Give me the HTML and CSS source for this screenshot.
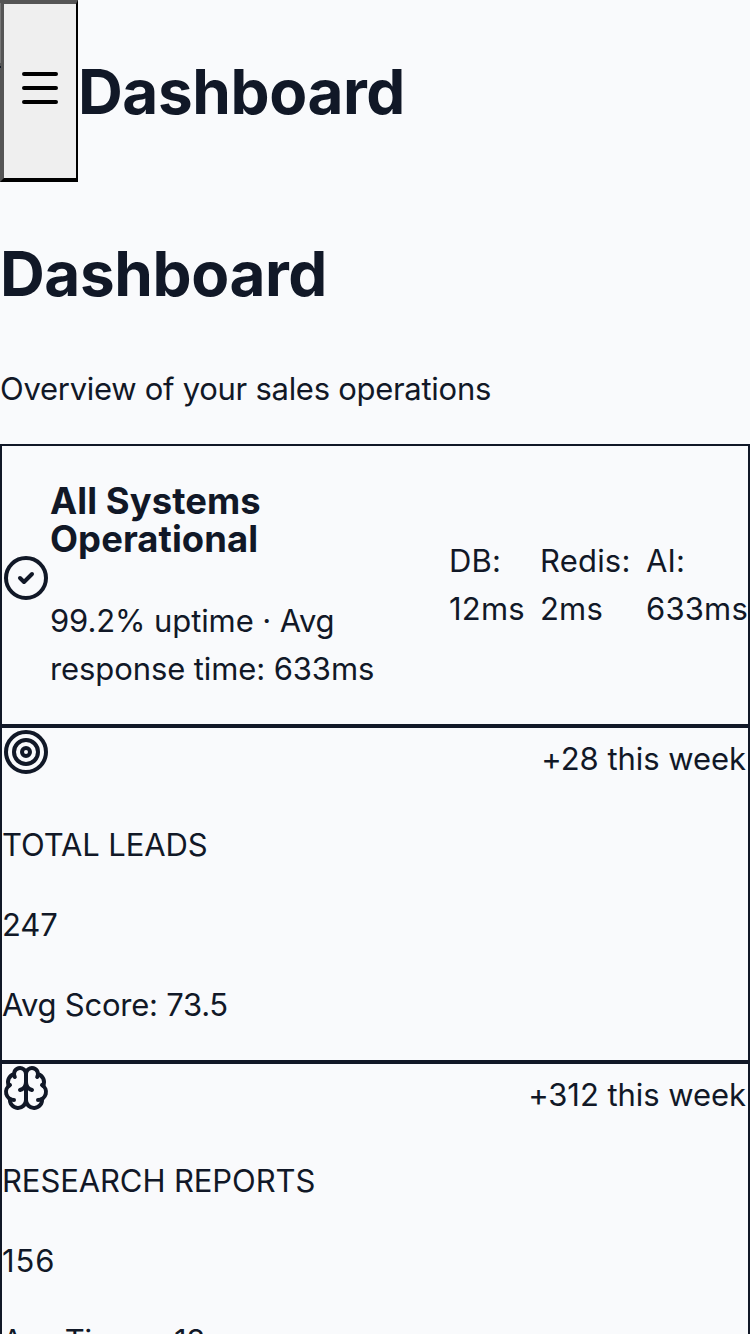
FILE: index.html
```html
<!DOCTYPE html>
<html lang="en">
<head>
<meta charset="utf-8">
<title>Dashboard</title>
<link rel="stylesheet" href="styles.css">
</head>
<body>
<header class="topbar">
  <button class="menu" aria-label="Open menu">
    <svg class="icon" viewBox="0 0 24 24"><path d="M4 5h16M4 12h16M4 19h16"/></svg>
  </button>
  <h1>Dashboard</h1>
</header>
<main>
  <h1>Dashboard</h1>
  <p>Overview of your sales operations</p>
  <section class="card status">
    <div class="summary">
      <div class="glyph glyph-status"><svg class="icon" viewBox="0 0 24 24"><circle cx="12" cy="12" r="10"/><path d="m9 12 2 2 4-4"/></svg></div>
      <div class="message">
        <h3>All Systems Operational</h3>
        <p>99.2% uptime · Avg response time: 633ms</p>
      </div>
    </div>
    <div class="latency">
      <div>DB:<br>12ms</div>
      <div>Redis:<br>2ms</div>
      <div>AI:<br>633ms</div>
    </div>
  </section>
  <section class="card">
    <div class="card-head">
      <div class="glyph"><svg class="icon" viewBox="0 0 24 24"><circle cx="12" cy="12" r="10"/><circle cx="12" cy="12" r="6"/><circle cx="12" cy="12" r="2"/></svg></div>
      <span class="trend">+28 this week</span>
    </div>
    <p>TOTAL LEADS</p>
    <p>247</p>
    <p class="detail">Avg Score: 73.5</p>
  </section>
  <section class="card">
    <div class="card-head">
      <div class="glyph"><svg class="icon" viewBox="0 0 24 24"><path d="M12 18V5"/><path d="M15 13a4.17 4.17 0 0 1-3-4 4.17 4.17 0 0 1-3 4"/><path d="M17.598 6.5A3 3 0 1 0 12 5a3 3 0 1 0-5.598 1.5"/><path d="M17.997 5.125a4 4 0 0 1 2.526 5.77"/><path d="M18 18a4 4 0 0 0 2-7.464"/><path d="M19.967 17.483A4 4 0 1 1 12 18a4 4 0 1 1-7.967-.517"/><path d="M6 18a4 4 0 0 1-2-7.464"/><path d="M6.003 5.125a4 4 0 0 0-2.526 5.77"/></svg></div>
      <span class="trend">+312 this week</span>
    </div>
    <p>RESEARCH REPORTS</p>
    <p class="count">156</p>
    <p class="detail">Avg Time: ~18s</p>
  </section>
</main>
</body>
</html>
```
FILE: styles.css
```css
* { box-sizing: border-box; }
html { overflow: hidden; }
body {
  margin: 0;
  height: 1334px;
  overflow: hidden;
  background: #f9fafc;
  color: #111827;
  font: 31px/48px Inter, "Liberation Sans", sans-serif;
  letter-spacing: -0.1px;
}
h1 { margin: 43px 0; padding-top: 1px; font-size: 62px; line-height: 95px; font-weight: 700; letter-spacing: -0.4px; }
h3 { margin: 37.4px 0; font-size: 36.4px; line-height: 37.5px; font-weight: 700; letter-spacing: 0.08px; }
p { margin: 32px 0 31px; padding-top: 1px; }
main > p { letter-spacing: -0.28px; }
.icon {
  width: 48px;
  height: 48px;
  display: block;
  fill: none;
  stroke: currentColor;
  stroke-width: 2;
  stroke-linecap: round;
  stroke-linejoin: round;
}
.topbar { display: flex; height: 182px; position: relative; }
.topbar::before {
  content: "";
  position: absolute;
  left: 0;
  top: 3px;
  width: 1px;
  height: 60px;
  background: #777;
}
.topbar::after {
  content: "";
  position: absolute;
  left: 0;
  top: 66px;
  width: 1px;
  height: 2px;
  background: #111827;
}
.menu {
  width: 78px;
  flex: none;
  padding: 0 0 6px 12px;
  border: 4px solid;
  border-right-width: 2px;
  border-color: #555 #000 #000 #555;
  background: #efefef;
  color: #000;
}
.card { border: 2px solid #111827; }
.card + .card > p { margin: 32px 0; padding: 0; transform: translateY(1px); }
.card > .detail { letter-spacing: -0.25px; }
.card > .count { letter-spacing: 0.9px; }
.status { display: flex; justify-content: space-between; align-items: center; }
.summary { display: flex; align-items: center; }
.glyph { height: 60px; flex: none; }
.glyph-status { height: 62px; }
.message { width: 340px; }
.latency {
  display: grid;
  grid-template-columns: 75px 90px 102px;
  gap: 16px;
  padding-top: 1px;
  white-space: nowrap;
  letter-spacing: 0.2px;
}
.card-head { display: flex; justify-content: space-between; align-items: center; }
.trend { padding: 2px 2px 0 0; letter-spacing: -0.05px; }
```
